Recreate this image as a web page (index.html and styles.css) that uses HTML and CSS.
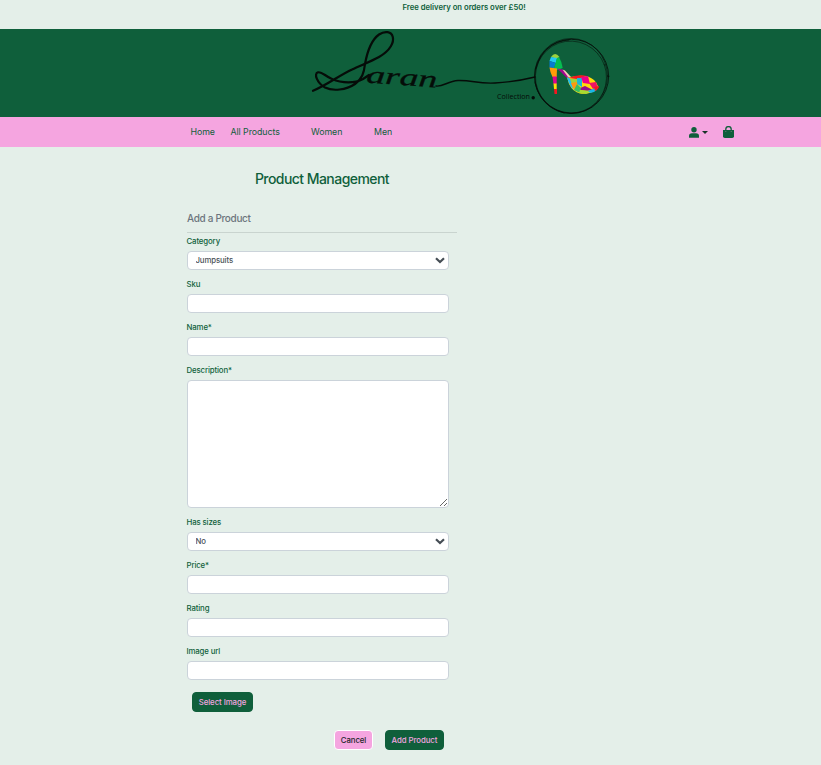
FILE: index.html
```html
<!DOCTYPE html>
<html lang="en">
<head>
<meta charset="utf-8">
<title>Product Management</title>
<link rel="stylesheet" href="styles.css">
</head>
<body>
<div class="delivery">Free delivery on orders over £50!</div>
<header class="banner">
<svg class="logo" viewBox="300 29 320 88" role="img" aria-label="Saran Collection">
  <g fill="none" stroke="#050c08" stroke-linecap="round" stroke-linejoin="round">
    <path stroke-width="2.200" d="M313 90.800C327 85 340 75 352 69.500C360 65.500 370 62 379 57C391 50 394 42 392.800 37C391.500 31.500 385 30.500 379 34.500C370 41 367 53 365 64C364 73 362 79 355 84C346 90 333 91.500 325 87.500C317 83 313.500 73.500 318 72.300C322 71.500 325 76 332 79C342 83.500 355 83.500 363 79L369 75"/>
    <path stroke-width="1.400" d="M436 86C443 87 448 81 458 80.500C472 80 478 84 495 83C511 82 523 80 535 77"/>
    <circle cx="571.700" cy="76.300" r="37" stroke-width=".8"/>
    <ellipse cx="571" cy="76" rx="36.500" ry="37.500" stroke-width=".6"/>
    <ellipse cx="571" cy="77" rx="35.500" ry="36" stroke-width=".5" transform="rotate(-20 571 77)"/>
    <path stroke-width=".8" d="M535 82C538 98 549 109 564 113M536 69C540 52 552 41 569 40"/>
  </g>
  <g transform="rotate(4 366 82)"><text class="logo-name" x="366" y="82.500" textLength="71" lengthAdjust="spacingAndGlyphs">aran</text></g>
  <text class="logo-sub" x="497" y="99" textLength="33" lengthAdjust="spacingAndGlyphs">Collection</text>
  <circle cx="533.200" cy="97.800" r="1.700" fill="#050c08"/>
  <g>
    <path fill="#ffdc08" d="M567 77Q573 77 577 76Q588 74.500 594 80Q600 86 596.500 90Q590 94.500 580 93.500Q573 92 569 84z"/>
    <path fill="#9bd13c" d="M551 57Q555 51 559.500 57L557 59z"/>
    <path fill="#22c8f5" d="M551 57L557 58L556 63L549.500 61z"/>
    <path fill="#087bd0" d="M549.500 61L556 63L554 68L549.500 67.500z"/>
    <path fill="#06bd50" d="M557 58L559 57Q561.500 61 562.700 68L557 70L554 68z"/>
    <path fill="#ff9d08" d="M549.500 67.500L557 68.500L556.700 77H552.500Q550 72 549.500 67.500z"/>
    <path fill="#e10091" d="M552.500 76.500H556.700V84H553.500z"/>
    <path fill="#ffda08" d="M553.500 83.500H556.700V89H554z"/>
    <path fill="#f51620" d="M554 89H557V94H554.500z"/>
    <path fill="#a4058e" d="M557 68.500L562.500 69.500L570 77L567 78L561.500 72.500z"/>
    <path fill="#f5cab8" d="M562.500 69.500L565 70.500L571 77L568 77z"/>
    <path fill="#20bff0" d="M567 77L571 79L573 88L577 92L571 87L568.500 82z"/>
    <path fill="#9bd13c" d="M570 79L577 78L581 83L572 84z"/>
    <path fill="#f51620" d="M569 78Q577 74 587 76L577 79z"/>
    <path fill="#1bb6d6" d="M577 78L582 78V87L577 84z"/>
    <path fill="#ed0088" d="M581 77L588 76L590 84L583 83z"/>
    <path fill="#ff9710" d="M571 83L577 82L578 91L573 88z"/>
    <path fill="#ed1464" d="M589 83L596 82L598 88L593 89z"/>
    <path fill="#97108a" d="M580 88L585 86L593 90L587 91L580 90z"/>
    <path fill="#38be61" d="M577 84L581 88L580 93L574 90z"/>
    <path fill="#a7db32" d="M580 90L592 91L586 94L579 93z"/>
    <path fill="#19b8e9" d="M588 91L598 87Q597 92 590 93z"/>
    <path fill="#f51620" d="M594 87L599 86Q599 89 595 91z"/>
  </g>
</svg>
</header>
<nav class="nav">
  <a class="home">Home</a><a class="all">All Products</a><a class="women">Women</a><a class="men">Men</a>
  <div class="tools">
    <svg class="user" viewBox="0 0 10 11"><circle cx="5" cy="2.800" r="2.700"/><path d="M0 10.700V9Q0 6.300 3 6.300H7Q10 6.300 10 9V10.700z"/></svg>
    <span class="caret"></span>
    <svg class="bag" viewBox="0 0 11 12"><path d="M0 4H11V10.200Q11 12 9.200 12H1.800Q0 12 0 10.200z"/><path class="handle" d="M2.800 6V3.200A2.700 2.600 0 0 1 8.200 3.200V6"/><path class="holes" d="M2.800 5.200V6M8.200 5.200V6"/></svg>
  </div>
</nav>
<main class="content">
  <h1>Product Management</h1>
  <h2>Add a Product</h2>
  <form>
    <div class="field"><label for="category">Category</label><div class="pick"><select id="category"><option>Jumpsuits</option></select><svg viewBox="0 0 10 7"><path d="M1 1.200L5 5L9 1.200"/></svg></div></div>
    <div class="field"><label for="sku">Sku</label><input id="sku"></div>
    <div class="field"><label for="name">Name*</label><input id="name"></div>
    <div class="field"><label for="desc">Description*</label><textarea id="desc"></textarea></div>
    <div class="field"><label for="sizes">Has sizes</label><div class="pick"><select id="sizes"><option>No</option></select><svg viewBox="0 0 10 7"><path d="M1 1.200L5 5L9 1.200"/></svg></div></div>
    <div class="field"><label for="price">Price*</label><input id="price"></div>
    <div class="field"><label for="rating">Rating</label><input id="rating"></div>
    <div class="field"><label for="url">Image url</label><input id="url"></div>
    <button type="button" class="btn select-image">Select Image</button>
    <div class="actions"><button type="button" class="btn cancel">Cancel</button><button type="button" class="btn add">Add Product</button></div>
  </form>
</main>
</body>
</html>
```
FILE: styles.css
```css
* { box-sizing: border-box; }
body { margin: 0; height: 765px; overflow: hidden; background: #e4efe9; color: #0f5f3b; font-family: Inter, "Liberation Sans", sans-serif; font-size: 7.800px; }
.delivery { height: 29px; padding-left: 402.500px; line-height: 15px; font-size: 7.7px; font-weight: 600; white-space: nowrap; }
.banner { height: 88px; background: #0f5f3b; padding-left: 300px; }
.logo { display: block; width: 320px; height: 88px; }
.logo-name { font: italic 24px "Liberation Serif", serif; fill: #050c08; stroke: #050c08; stroke-width: .3px; }
.logo-sub { font: 7px "Open Sans", sans-serif; fill: #050c08; }
.nav { height: 30px; background: #f5a5e0; display: flex; align-items: center; padding: 0 87px 0 190.500px; font-size: 8.800px; letter-spacing: -.05px; white-space: nowrap; }
.nav a { margin-top: -1px; }
.home { width: 40px; }
.all { width: 80.500px; }
.women { width: 63px; }
.tools { margin-left: auto; display: flex; align-items: center; fill: #0f5f3b; }
.user { width: 10px; height: 11px; }
.caret { margin: 0 15px 0 3.500px; border: 3px solid transparent; border-top-color: #173326; border-bottom: 0; }
.bag { width: 11px; height: 12px; margin-top: -1px; }
.handle { fill: none; stroke: #0f5f3b; stroke-width: 1.300; }
.holes { stroke: #a6839a; stroke-width: .8; }
.content { width: 270px; margin-left: 187px; }
h1 { margin: 0; padding-top: 21px; height: 61px; font-size: 14px; line-height: 21px; font-weight: 500; letter-spacing: -.55px; text-align: center; }
h2 { margin: 0 0 2px; height: 25px; padding-top: 3px; border-bottom: 1px solid #c9d4cf; font-size: 10px; line-height: 15px; font-weight: 500; letter-spacing: -.33px; color: #6c757d; }
form { width: 262px; }
.field { margin-bottom: 8px; }
label { display: block; height: 12px; line-height: 12px; margin: 0 0 4px -.5px; font-weight: 500; letter-spacing: -.12px; }
input, select, textarea { display: block; width: 100%; height: 19px; margin: 0; padding: 0 8px; border: 1px solid #cbd3da; border-radius: 4px; background: #fff; color: #495057; font: 500 7.800px Inter, sans-serif; letter-spacing: -.12px; }
select { appearance: none; padding: 0 7.500px 1px; }
textarea { height: 128px; resize: vertical; }
.pick { display: grid; align-items: center; }
.pick select, .pick svg { grid-area: 1 / 1; }
.pick svg { justify-self: end; margin-right: 4px; width: 10px; height: 7px; fill: none; stroke: #454d54; stroke-width: 2.200; }
.btn { display: block; height: 20px; padding: 0; border: 1px solid #0f5f3b; border-radius: 4px; background: #0f5f3b; color: #f5a5e0; font: 500 7.800px Inter, sans-serif; letter-spacing: -.06px; white-space: nowrap; }
.select-image { width: 61px; margin: 12px 0 0 5px; }
.actions { display: flex; justify-content: flex-end; gap: 12px; margin: 18px 5px 0 0; }
.cancel { width: 39px; background: #f5a5e0; border-color: #fff; color: #212529; }
.add { width: 59px; }
```
